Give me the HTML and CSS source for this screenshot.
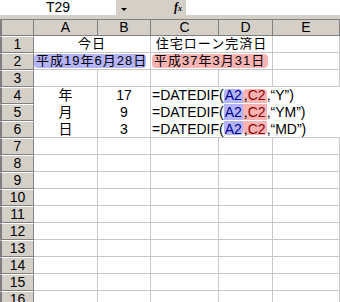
FILE: index.html
```html
<html lang="ja">
<head>
    <meta charset="UTF-8">
    <title>DATEDIF</title>
    <link rel="stylesheet" href="styles.css">
</head>
<body>
<div class="bar">
    <div class="namebox">T29</div>
    <div class="drop"><span class="arrow"></span></div>
    <div class="fx"><i>f</i><small>x</small></div>
    <div class="input"></div>
</div>

<div class="sheet">
    <div class="h corner"></div>
    <div class="h">A</div>
    <div class="h">B</div>
    <div class="h">C</div>
    <div class="h">D</div>
    <div class="h">E</div>

    <div class="h rn">1</div>
    <div class="c span2 mid jp">今日</div>
    <div class="c span2 mid jp">住宅ローン完済日</div>
    <div class="c"></div>

    <div class="h rn">2</div>
    <div class="c span2"><span class="mark blue jp">平成19年6月28日</span></div>
    <div class="c span2"><span class="mark red jp">平成37年3月31日</span></div>
    <div class="c"></div>

    <div class="h rn">3</div>
    <div class="c"></div><div class="c"></div><div class="c"></div><div class="c"></div><div class="c"></div>

    <div class="h rn">4</div>
    <div class="c mid nb">年</div>
    <div class="c mid nb">17</div>
    <div class="c span3 nb f">=DATEDIF(<span class="ref ra top">A2</span><span class="ref rc top"><b>,</b>C2</span>,“Y”)</div>

    <div class="h rn">5</div>
    <div class="c mid nb">月</div>
    <div class="c mid nb">9</div>
    <div class="c span3 nb f">=DATEDIF(<span class="ref ra">A2</span><span class="ref rc"><b>,</b>C2</span>,“YM”)</div>

    <div class="h rn">6</div>
    <div class="c mid">日</div>
    <div class="c mid">3</div>
    <div class="c span3 f">=DATEDIF(<span class="ref ra bot">A2</span><span class="ref rc bot"><b>,</b>C2</span>,“MD”)</div>

    <div class="h rn">7</div>
    <div class="c"></div><div class="c"></div><div class="c"></div><div class="c"></div><div class="c"></div>
    <div class="h rn">8</div>
    <div class="c"></div><div class="c"></div><div class="c"></div><div class="c"></div><div class="c"></div>
    <div class="h rn">9</div>
    <div class="c"></div><div class="c"></div><div class="c"></div><div class="c"></div><div class="c"></div>
    <div class="h rn">10</div>
    <div class="c"></div><div class="c"></div><div class="c"></div><div class="c"></div><div class="c"></div>
    <div class="h rn">11</div>
    <div class="c"></div><div class="c"></div><div class="c"></div><div class="c"></div><div class="c"></div>
    <div class="h rn">12</div>
    <div class="c"></div><div class="c"></div><div class="c"></div><div class="c"></div><div class="c"></div>
    <div class="h rn">13</div>
    <div class="c"></div><div class="c"></div><div class="c"></div><div class="c"></div><div class="c"></div>
    <div class="h rn">14</div>
    <div class="c"></div><div class="c"></div><div class="c"></div><div class="c"></div><div class="c"></div>
    <div class="h rn">15</div>
    <div class="c"></div><div class="c"></div><div class="c"></div><div class="c"></div><div class="c"></div>
    <div class="h rn">16</div>
    <div class="c"></div><div class="c"></div><div class="c"></div><div class="c"></div><div class="c"></div>
</div>
</body>
</html>
```

FILE: styles.css
```css
* {
    margin: 0;
    padding: 0;
    box-sizing: border-box;
}

body {
    width: 340px;
    height: 302px;
    overflow: hidden;
    background: #d4d0c8;
    font-family: "Liberation Sans", "Noto Sans CJK JP", sans-serif;
    font-size: 14px;
    color: #000;
}

/* name box + formula bar */
.bar {
    display: flex;
    height: 19px;
    align-items: flex-start;
}

.bar .namebox {
    width: 116px;
    height: 15px;
    line-height: 15px;
    background: #fff;
    text-align: center;
}

.bar .drop {
    width: 58px;
    height: 15px;
    padding: 8px 0 0 5px;
}

.bar .arrow {
    display: block;
    width: 0;
    height: 0;
    border-left: 3px solid transparent;
    border-right: 3px solid transparent;
    border-top: 3px solid #000;
}

.bar .fx {
    width: 12px;
    height: 15px;
    line-height: 15px;
    font-family: "Liberation Serif", serif;
    font-weight: bold;
    font-size: 12px;
    font-style: italic;
}

.bar .fx small {
    font-size: 8px;
}

.bar .input {
    flex: 1;
    height: 15px;
    background: #fff;
}

/* grid */
.sheet {
    display: grid;
    grid-template-columns: 34px 64px 53px 68px 54px 67px;
    grid-auto-rows: 17px;
    background: #fff;
}

.h {
    background: #d4d0c8;
    border-top: 1px solid #fff;
    border-right: 1px solid #808080;
    border-bottom: 1px solid #808080;
    text-align: center;
    line-height: 15px;
}

.sheet > .h:nth-child(-n+6) {
    border-top: 1px solid #808080;
}

.h.rn, .h.corner {
    border-left: 2px solid #808080;
}

.c {
    border-right: 1px solid #c8c8c8;
    border-bottom: 1px solid #c8c8c8;
    line-height: 16px;
    white-space: nowrap;
}

.c.nb {
    border-bottom-color: #fff;
}

.jp {
    font-size: 13px;
    letter-spacing: 1px;
}

.span2 {
    grid-column: span 2;
}

.span3 {
    grid-column: span 3;
    border-right: none;
}

.mid {
    text-align: center;
}

.mark {
    display: block;
    height: 14px;
    line-height: 14px;
    margin: 1px 4px 0 0;
    padding-left: 2px;
    border-radius: 4px;
}

.mark.blue {
    background: #b4b4fa;
}

.mark.red {
    background: #fab4b4;
    margin-left: 1px;
}

.f {
    padding-left: 1px;
}

.ref {
    display: inline-block;
    height: 16px;
    vertical-align: top;
    padding: 0 1px;
}

.ref b {
    font-weight: normal;
    color: #000;
}

.ref.ra {
    background: #b4b4fa;
    color: #00008c;
}

.ref.rc {
    background: #fab4b4;
    color: #8c0000;
}

.ref.top {
    border-radius: 4px 4px 0 0;
    margin-top: 2px;
    height: 14px;
    line-height: 12px;
}

.ref.bot {
    border-radius: 0 0 4px 4px;
    height: 14px;
}
```
